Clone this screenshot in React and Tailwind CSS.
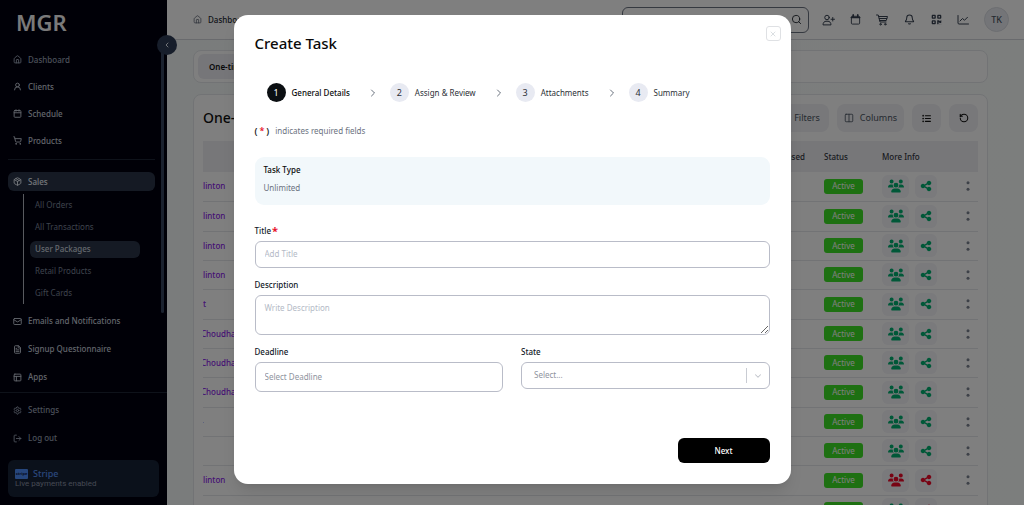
import React from "react";
import {
  House, UserRound, Calendar, ShoppingCart, Package, Mail, FileText, PanelsTopLeft,
  Settings, LogOut, ChevronLeft, ChevronRight, ChevronDown, Search,
  Bell, Columns2, X, RotateCcw,
} from "lucide-react";
import { FaUsers, FaShareNodes, FaListUl, FaQrcode } from "react-icons/fa6";

const mainNav = [
  { label: "Dashboard", Icon: House, dim: true },
  { label: "Clients", Icon: UserRound },
  { label: "Schedule", Icon: Calendar },
  { label: "Products", Icon: ShoppingCart },
];
const salesNav = ["All Orders", "All Transactions", "User Packages", "Retail Products", "Gift Cards"];
const moreNav = [
  { label: "Emails and Notifications", Icon: Mail },
  { label: "Signup Questionnaire", Icon: FileText },
  { label: "Apps", Icon: PanelsTopLeft },
];
const footNav = [
  { label: "Settings", Icon: Settings, dim: true },
  { label: "Log out", Icon: LogOut, dim: true },
];
const rows = [
  { name: "linton" }, { name: "linton" }, { name: "linton" }, { name: "linton" },
  { name: "t" }, { name: "Choudha", indent: "-indent-[2px]" },
  { name: "Choudha", indent: "-indent-[2px]" }, { name: "Choudha", indent: "-indent-[2px]" },
  { name: "-", indent: "-indent-[2px]" }, { name: "" },
  { name: "linton", users: "text-[#f00828]", share: "text-[#f00828]" },
  { name: "", share: "text-[#f00828]" },
];
const steps = ["General Details", "Assign & Review", "Attachments", "Summary"];

function NavItem({ label, Icon, dim, height }) {
  return (
    <a href="#" className={`flex items-center gap-1.5 px-[5px] ${height} ${dim ? "text-[#98a1b3]" : "text-[#c3cad6]"}`}>
      <Icon size={9} strokeWidth={2.5} className="shrink-0" />
      <span>{label}</span>
    </a>
  );
}

function Sidebar() {
  return (
    <aside className="relative flex w-[167px] shrink-0 flex-col bg-[#00000f] text-[8px] leading-3 font-medium">
      <div className="flex h-[44px] shrink-0 items-center px-4 text-[22px] font-semibold text-[#f4f4f4]">MGR</div>
      <div className="flex min-h-0 grow overflow-hidden pl-2">
        <nav className="grow pt-[2px] pr-1.5">
          {mainNav.map((item) => <NavItem key={item.label} {...item} height="h-[27px]" />)}
          <div className="mt-[5px] border-t border-[#1c2434]" />
          <a href="#" className="mt-3 flex h-[19px] items-center gap-1.5 rounded-md bg-[#2a3549] px-[5px] text-[#e8edf5]">
            <Package size={9} strokeWidth={2.5} className="shrink-0" />
            <span>Sales</span>
          </a>
          <ul className="mt-[3px] ml-[15px] border-l border-[#b0b5be] pl-1.5 font-normal text-[#7c8598]">
            {salesNav.map((label) => (
              <li key={label} className="flex h-[22px] items-center">
                <a
                  href="#"
                  className={`flex h-[17px] w-[110px] items-center rounded-md px-[5px] ${label === "User Packages" ? "bg-[#2a3549] font-medium text-[#c8cfda]" : ""}`}
                >
                  {label}
                </a>
              </li>
            ))}
          </ul>
          <div className="mt-[3px]">
            {moreNav.map((item) => <NavItem key={item.label} {...item} height="h-[28px]" />)}
          </div>
        </nav>
        <div className="mr-[3px] h-[269px] w-[3px] shrink-0 rounded-full bg-[#36445e]" />
      </div>
      <div className="mt-auto shrink-0 border-t border-[#1c2434] px-2 pt-[3px] pb-2">
        {footNav.map((item) => <NavItem key={item.label} {...item} height="h-[28px]" />)}
        <div className="mt-2 rounded-md bg-[#172236] px-[7px] py-2 leading-[10px]">
          <div className="flex items-center gap-[5px] text-[9px] leading-[11px] text-[#5590f5]">
            <span className="flex h-[10px] w-[13px] items-center justify-center rounded-[1px] bg-[#4c8cf8] text-[4px] font-bold text-[#10204a]">stripe</span>
            Stripe
          </div>
          <div className="font-['Roboto'] text-[8px] font-normal text-[#8a93a6]">Live payments enabled</div>
        </div>
      </div>
      <button
        type="button"
        aria-label="Collapse sidebar"
        className="absolute top-[35px] -right-[10px] flex size-5 items-center justify-center rounded-full bg-[#2f3c56] text-[#e2e8f0]"
      >
        <ChevronLeft size={8} strokeWidth={3} />
      </button>
    </aside>
  );
}

const stroke = { viewBox: "0 0 24 24", fill: "none", stroke: "currentColor", strokeWidth: 2, strokeLinecap: "round", strokeLinejoin: "round" };

function UserAddIcon() {
  return (
    <svg width="13" height="12" {...stroke} viewBox="0 0 26 24">
      <circle cx="10" cy="7" r="4.5" />
      <path d="M2 21c0-4 3-6.500 6-6.500h4c3 0 6 2.500 6 6.500zM21.500 7v7M18 10.500h7" />
    </svg>
  );
}

function CalendarIcon() {
  return (
    <svg width="11" height="11" {...stroke}>
      <rect x="3" y="5" width="18" height="17" rx="2" />
      <path d="M3 7.500h18M7 2v4M17 2v4" strokeWidth="3.500" />
    </svg>
  );
}

function CartIcon() {
  return (
    <svg width="12" height="12" {...stroke}>
      <path d="M1 2h3.500l3.500 14h12M5.500 5H23l-2.500 8H7.500M6.500 9h15" />
      <circle cx="9" cy="20.500" r="1.500" />
      <circle cx="18.500" cy="20.500" r="1.500" />
    </svg>
  );
}

function ChartIcon() {
  return (
    <svg width="12" height="12" {...stroke}>
      <path d="M2 3v15a2 2 0 0 0 2 2h19M6 14l5-5 4 3.500 6-6" />
    </svg>
  );
}

function DotsIcon() {
  return (
    <svg width="4" height="10" viewBox="0 0 4 10" fill="currentColor">
      <circle cx="2" cy="1.800" r="1.500" />
      <circle cx="2" cy="8.200" r="1.500" />
    </svg>
  );
}

function TopBar() {
  const tools = [
    ["Invite user", <UserAddIcon />],
    ["Calendar", <CalendarIcon />],
    ["Cart", <CartIcon />],
    ["Alerts", <Bell size={11} strokeWidth={2.2} />],
    ["QR code", <FaQrcode size={11} />],
    ["Reports", <ChartIcon />],
  ];
  return (
    <header className="flex h-10 shrink-0 items-center border-b border-[#d2d5da] pr-[15px] pl-[26px]">
      <a href="#" className="flex items-center gap-[6px] text-[8px] font-medium text-[#222730]">
        <House size={9} className="text-[#5a6272]" />
        Dashboard
      </a>
      <div className="ml-auto flex h-[26px] w-[187px] items-center rounded-md border border-[#6b7280] pr-1.5">
        <input aria-label="Search" className="min-w-0 grow bg-transparent px-2 text-[8px] outline-none" />
        <Search size={11} className="shrink-0 text-[#222730]" />
      </div>
      <div className="ml-[13px] flex items-center gap-[15px] text-[#374151]">
        {tools.map(([name, icon]) => (
          <button key={name} type="button" aria-label={name} className="flex w-3 justify-center *:shrink-0">{icon}</button>
        ))}
      </div>
      <button type="button" className="ml-[15px] flex size-[25px] items-center justify-center rounded-full border border-[#d9dce2] bg-[#e9ebf1] text-[9px] font-medium text-[#4b5563]">TK</button>
    </header>
  );
}

function PackagesCard() {
  const tool = "flex h-[28px] items-center justify-center rounded-lg bg-[#f0f0f4]";
  return (
    <section className="mt-[11px] rounded-lg border border-[#e4e7eb] bg-white px-[9px] pt-[9px] pb-4">
      <div className="flex items-center gap-2 text-[8px] text-[#4b5563]">
        <h1 className="mr-auto text-[14px] leading-[14px] font-medium text-[#111]">One-time</h1>
        <button type="button" className={`${tool} w-[56px] gap-1.5 pl-3 text-[9px]`}>Filters</button>
        <button type="button" className={`${tool} w-[67px] gap-1.5 text-[9px]`}><Columns2 size={10} />Columns</button>
        <button type="button" aria-label="List view" className={`${tool} w-[29px] text-[#111]`}><FaListUl size={9} /></button>
        <button type="button" aria-label="Refresh" className={`${tool} w-[29px] text-[#111]`}><RotateCcw size={10} strokeWidth={2.5} /></button>
      </div>
      <table className="mt-[9px] w-full table-fixed text-left text-[8px]">
        <thead>
          <tr className="h-[31px] bg-[#eeeef3] font-medium text-[#33373f]">
            <th className="font-medium" aria-label="Name" />
            <th className="w-[60px] pr-[19px] text-right font-medium">Purchased</th>
            <th className="w-[58px] font-medium">Status</th>
            <th className="w-[76px] font-medium">More Info</th>
            <th className="w-[20px]" aria-label="Actions" />
          </tr>
        </thead>
        <tbody>
          {rows.map((row, i) => (
            <tr key={i} className="h-[29px] border-b border-[#e4e6ea] nth-[3n+2]:h-[30px]">
              <td className={`overflow-hidden text-[8px] font-medium text-[#8a22e8] ${row.indent || ""}`}>{row.name}</td>
              <td />
              <td>
                <span className="flex h-[15px] w-[39px] items-center justify-center rounded-[3px] bg-[#3ce024] text-white">Active</span>
              </td>
              <td>
                <div className="flex gap-1.5">
                  <button type="button" aria-label="Members" className={`flex h-[23px] w-[27px] items-center justify-center rounded-md bg-[#f4f4f8] ${row.users || "text-[#00b070]"}`}><FaUsers size={16} /></button>
                  <button type="button" aria-label="Share" className={`flex h-[23px] w-[22px] items-center justify-center rounded-md bg-[#f4f4f8] ${row.share || "text-[#00b070]"}`}><FaShareNodes size={12} /></button>
                </div>
              </td>
              <td>
                <button type="button" aria-label="More actions" className="flex w-full justify-center text-[#7b8290]"><DotsIcon /></button>
              </td>
            </tr>
          ))}
        </tbody>
      </table>
    </section>
  );
}

function Label({ htmlFor, required, children }) {
  return (
    <label htmlFor={htmlFor} className="flex h-3 items-center gap-[1px] text-[8px] font-medium text-[#111827]">
      {children}
      {required && <span className="text-[11px] leading-3 font-bold text-[#e8132b]">*</span>}
    </label>
  );
}

function TaskDialog() {
  const field = "w-full rounded-md border border-[#b9bcc8] bg-white px-[9px] text-[8px] outline-none";
  return (
    <div className="absolute inset-0 flex items-start justify-center bg-black/50 pt-[15px]">
      <form role="dialog" aria-label="Create Task" className="w-full max-w-[557px] rounded-[14px] bg-white px-[21px] pb-[21px] shadow-lg">
        <div className="flex justify-between">
          <h2 className="pt-[18px] text-[15px] leading-5 font-medium text-[#0a0a0a]">Create Task</h2>
          <button type="button" aria-label="Close" className="mt-[11px] -mr-[11px] flex size-[15px] items-center justify-center rounded-[3px] border border-[#dfe1e4] text-[#c9ced3]">
            <X size={8} />
          </button>
        </div>
        <ol className="mt-[30px] flex h-[19px] items-center pl-3 text-[8px] text-[#2b2f36]">
          {steps.map((label, i) => (
            <li key={label} className="flex items-center">
              {i > 0 && <ChevronRight size={12} strokeWidth={1.5} className="mr-[11px] ml-[17px] text-[#374151]" />}
              <span className={`flex size-[19px] items-center justify-center rounded-full text-[9px] ${i === 0 ? "bg-[#0b0f12] text-white" : "bg-[#e8eaf2]"}`}>{i + 1}</span>
              <span className={`ml-1.5 ${i === 0 ? "font-medium text-[#0a0a0a]" : ""}`}>{label}</span>
            </li>
          ))}
        </ol>
        <p className="mt-[23px] flex h-3 items-center gap-1.5 text-[8px] leading-3 text-[#6b7280]">
          <span className="flex gap-[2px] text-[9px] leading-3 font-semibold text-[#222]">
            <span>(</span>
            <span className="text-[#e8132b]">*</span>
            <span>)</span>
          </span>
          <span>indicates required fields</span>
        </p>
        <div className="mt-5 h-12 rounded-[9px] bg-[#f2f8fb] px-[9px] pt-[7px] text-[8px]">
          <p className="leading-3 font-medium text-[#0a0a0a]">Task Type</p>
          <p className="mt-1.5 leading-3 text-[#6b7280]">Unlimited</p>
        </div>
        <div className="mt-5">
          <Label htmlFor="title" required>Title</Label>
          <input id="title" placeholder="Add Title" className={`${field} mt-1 block h-[27px] pb-[2px] placeholder:text-[#b4bac6]`} />
        </div>
        <div className="mt-[11px]">
          <Label htmlFor="description">Description</Label>
          <textarea id="description" placeholder="Write Description" className={`${field} mt-1 block h-10 pt-1.5 leading-3 placeholder:text-[#b4bac6]`} />
        </div>
        <div className="mt-[11px] grid grid-cols-2 items-start gap-[18px]">
          <div>
            <Label htmlFor="deadline">Deadline</Label>
            <input id="deadline" placeholder="Select Deadline" className={`${field} mt-1 block h-[30px] pb-[2px] placeholder:text-[#8f949e]`} />
          </div>
          <div>
            <Label htmlFor="state">State</Label>
            <div className="relative mt-1">
              <select id="state" className={`${field} block h-[27px] appearance-none pb-[2px] pl-3 text-[#8f949e]`}>
                <option>Select...</option>
              </select>
              <div className="pointer-events-none absolute inset-y-1.5 right-0 flex w-6 items-center justify-center border-l border-[#c9ccd3] text-[#c0c3ca]">
                <ChevronDown size={10} strokeWidth={2.5} />
              </div>
            </div>
          </div>
        </div>
        <div className="mt-[46px] flex justify-end">
          <button type="button" className="h-[25px] w-[92px] rounded-md bg-black text-[8px] font-medium text-white">Next</button>
        </div>
      </form>
    </div>
  );
}

export default function App() {
  return (
    <div className="relative flex h-screen overflow-hidden bg-white font-['Noto_Sans','Open_Sans',sans-serif]">
      <Sidebar />
      <div className="flex min-w-0 grow flex-col">
        <TopBar />
        <main className="min-h-0 grow overflow-hidden bg-linear-to-r from-[#f4f9f8] to-[#f9fcfb] pt-[10px] pr-9 pl-[26px]">
          <div className="flex h-[33px] items-center rounded-lg border border-[#e4e7eb] bg-white px-1">
            <button type="button" className="h-[25px] rounded-md bg-[#ececf2] px-[11px] text-[8px] font-semibold text-[#111]">One-time Packages</button>
          </div>
          <PackagesCard />
        </main>
      </div>
      <TaskDialog />
    </div>
  );
}
